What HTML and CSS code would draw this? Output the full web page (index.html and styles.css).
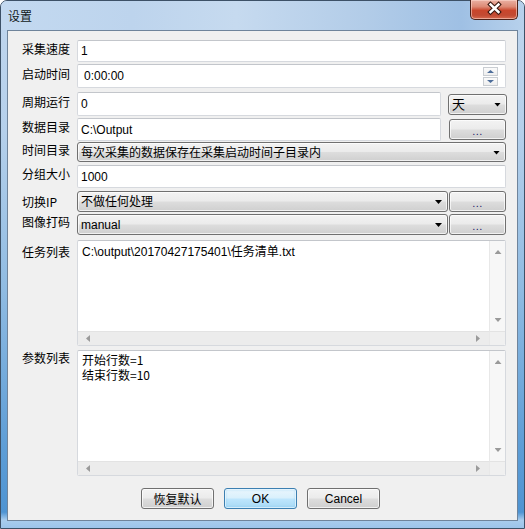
FILE: index.html
```html
<!DOCTYPE html>
<html lang="zh-CN">
<head>
<meta charset="utf-8">
<title>设置</title>
<link rel="stylesheet" href="styles.css">
</head>
<body>
<div class="window">
  <div class="titlebar">
    <span class="title">设置</span>
    <div class="close-btn">
      <svg width="48" height="20" viewBox="0 0 48 20">
        <path d="M20.5 5.5 L28.5 13 M28.5 5.5 L20.5 13" stroke="#3b1a12" stroke-width="4.6" stroke-linecap="square" fill="none"/>
        <path d="M20.5 5.5 L28.5 13 M28.5 5.5 L20.5 13" stroke="#ffffff" stroke-width="2.4" stroke-linecap="square" fill="none"/>
      </svg>
    </div>
  </div>
  <div class="client">
    <div class="form">
      <div class="row row-speed">
        <span class="label">采集速度</span>
        <div class="field">1</div>
      </div>
      <div class="row row-start">
        <span class="label">启动时间</span>
        <div class="field field-time">
          <span class="time-text">0:00:00</span>
          <div class="spinner"><span class="spin"><i class="tri-up"></i></span><span class="spin"><i class="tri-down"></i></span></div>
        </div>
      </div>
      <div class="row row-period">
        <span class="label">周期运行</span>
        <div class="field field-short">0</div>
        <div class="combo combo-unit"><span class="combo-text">天</span><i class="combo-arrow"></i></div>
      </div>
      <div class="row row-dir">
        <span class="label">数据目录</span>
        <div class="field field-short">C:\Output</div>
        <div class="btn btn-dots">...</div>
      </div>
      <div class="row row-timedir">
        <span class="label">时间目录</span>
        <div class="combo combo-wide"><span class="combo-text">每次采集的数据保存在采集启动时间子目录内</span><i class="combo-arrow"></i></div>
      </div>
      <div class="row row-group">
        <span class="label">分组大小</span>
        <div class="field">1000</div>
      </div>
      <div class="row row-ip">
        <span class="label label-ip">切换IP</span>
        <div class="combo combo-mid"><span class="combo-text">不做任何处理</span><i class="combo-arrow"></i></div>
        <div class="btn btn-dots btn-dots-near">...</div>
      </div>
      <div class="row row-img">
        <span class="label">图像打码</span>
        <div class="combo combo-mid"><span class="combo-text">manual</span><i class="combo-arrow"></i></div>
        <div class="btn btn-dots btn-dots-near">...</div>
      </div>
      <div class="row row-task">
        <span class="label label-task">任务列表</span>
        <div class="textbox">
          <div class="textbox-content">C:\output\20170427175401\任务清单.txt</div>
          <div class="vscroll"><i class="sa sa-up"></i><i class="sa sa-down"></i></div>
          <div class="hscroll"><i class="sa sa-left"></i><i class="sa sa-right"></i></div>
          <div class="corner"></div>
        </div>
      </div>
      <div class="row row-param">
        <span class="label label-param">参数列表</span>
        <div class="textbox">
          <div class="textbox-content textbox-lines"><div>开始行数=1</div><div>结束行数=10</div></div>
          <div class="vscroll"><i class="sa sa-up"></i><i class="sa sa-down"></i></div>
          <div class="hscroll"><i class="sa sa-left"></i><i class="sa sa-right"></i></div>
          <div class="corner"></div>
        </div>
      </div>
    </div>
    <div class="buttons">
      <div class="btn btn-action">恢复默认</div>
      <div class="btn btn-action btn-default">OK</div>
      <div class="btn btn-action">Cancel</div>
    </div>
  </div>
</div>
</body>
</html>
```

FILE: styles.css
```css
* { box-sizing: border-box; }

html, body {
  margin: 0;
  padding: 0;
  width: 525px;
  height: 529px;
  overflow: hidden;
  background: #ffffff;
}

body {
  font-family: "Liberation Sans", "Noto Sans CJK SC", sans-serif;
  font-size: 12px;
  color: #000;
}

.window {
  width: 525px;
  height: 529px;
  display: flex;
  flex-direction: column;
  border: 1px solid #3d5167;
  border-radius: 7px 7px 0 0;
  padding: 0 6px 7px 6px;
  background: linear-gradient(to bottom, #c0d6ee 0%, #b5d0eb 25%, #8fbbe2 55%, #5d9dd6 85%, #4f94d2 97%, #a9cdee 98.5%, #9cc4ea 100%);
}

.titlebar {
  height: 29px;
  display: flex;
  align-items: flex-start;
  margin: 0 -6px;
  padding: 0 6px;
  background: linear-gradient(to right, #c3d9f0 0%, #bdd4ed 25%, #c6daef 45%, #b2cce8 70%, #9fc0e4 88%, #b7d1ec 100%);
  border-radius: 6px 6px 0 0;
}

.title {
  font-family: "Noto Sans CJK SC", sans-serif;
  font-size: 12px;
  line-height: 14px;
  margin-top: 8px;
  margin-left: 1px;
  color: #101820;
}

.close-btn {
  margin-left: auto;
  margin-top: -1px;
  width: 48px;
  height: 20px;
  border: 1px solid #4b2118;
  border-top: none;
  border-radius: 0 0 5px 5px;
  background: linear-gradient(to bottom, #eab1a3 0%, #dd8a75 35%, #c9462c 55%, #c24a32 80%, #d66a4f 100%);
  box-shadow: inset 0 0 0 1px rgba(255, 220, 210, 0.55);
  overflow: hidden;
}

.close-btn svg { display: block; margin: -1px 0 0 -1px; }

.client {
  flex: 1;
  display: flex;
  flex-direction: column;
  background: #f0f0f0;
  border: 1px solid #6f849b;
}

.form {
  display: flex;
  flex-direction: column;
  padding: 9px 11px 0 14px;
}

.row {
  display: flex;
  align-items: center;
}

.label {
  flex: 0 0 55px;
  font-family: "Noto Sans CJK SC", sans-serif;
  font-size: 12px;
  line-height: 14px;
  white-space: nowrap;
  margin-bottom: 5px;
}

.label-ip { margin-bottom: 0; }

.row-speed { height: 22px; }
.row-start { height: 24px; margin-top: 2px; }
.row-period { height: 24px; margin-top: 4px; }
.row-dir { height: 23px; margin-top: 2px; }
.row-timedir { height: 20px; margin-top: 1px; }
.row-group { height: 23px; margin-top: 3px; }
.row-ip { height: 21px; margin-top: 3px; }
.row-img { height: 21px; margin-top: 2px; }
.row-task { height: 106px; margin-top: 5px; align-items: flex-start; }
.row-param { height: 126px; margin-top: 4px; align-items: flex-start; }

.label-task { margin-top: 5px; margin-bottom: 0; }
.label-param { margin-top: 1px; margin-bottom: 0; }

.field {
  flex: 1;
  height: 100%;
  display: flex;
  align-items: center;
  padding: 0 3px;
  background: #ffffff;
  border: 1px solid #d6d9de;
  border-top-color: #c3c6cb;
  border-radius: 2px;
  white-space: nowrap;
}

.field-short { flex: 0 0 364px; }

.field-time { padding-left: 6px; }

.time-text { flex: 1; }

.spinner {
  display: flex;
  flex-direction: column;
  gap: 1px;
  margin-right: 4px;
  margin-top: 1px;
}

.spin {
  width: 15px;
  height: 9px;
  border: 1px solid #c9cdd2;
  background: linear-gradient(#fbfbfb, #eeeeee);
  display: flex;
  align-items: center;
  justify-content: center;
}

.tri-up, .tri-down {
  display: block;
  width: 7px;
  height: 3px;
  background: #4d6d9a;
}
.tri-up { clip-path: polygon(50% 0, 100% 100%, 0 100%); }
.tri-down { clip-path: polygon(0 0, 100% 0, 50% 100%); }

.combo, .btn {
  display: flex;
  align-items: center;
  border: 1px solid #707070;
  border-radius: 3px;
  background: linear-gradient(to bottom, #f3f3f3 0%, #ebebeb 48%, #dddddd 52%, #cfcfcf 100%);
  box-shadow: inset 0 0 0 1px rgba(255, 255, 255, 0.7);
  white-space: nowrap;
}

.combo {
  height: 100%;
  padding: 0 5px 0 3px;
}

.combo-text {
  flex: 1;
  font-family: "Noto Sans CJK SC", sans-serif;
  line-height: 14px;
}

.combo-arrow {
  display: block;
  width: 7px;
  height: 4px;
  margin-top: 1px;
  background: #000;
  clip-path: polygon(0 0, 100% 0, 50% 100%);
}

.combo-unit {
  flex: 0 0 59px;
  height: 21px;
  margin-left: 7px;
}

.combo-unit .combo-text { font-size: 13px; }

.combo-wide { flex: 1; }

.combo-mid { flex: 0 0 371px; }

.combo-mid .combo-text { font-family: "Liberation Sans", "Noto Sans CJK SC", sans-serif; }

.btn {
  justify-content: center;
  font-family: "Liberation Sans", "Noto Sans CJK SC", sans-serif;
}

.btn-dots {
  flex: 0 0 57px;
  height: 21px;
  margin-left: 8px;
  font-size: 11px;
  color: #1a1a6a;
  padding-top: 3px;
  letter-spacing: 0.5px;
}

.btn-dots-near { margin-left: 1px; height: 100%; }

.textbox {
  flex: 1;
  height: 100%;
  display: grid;
  grid-template-columns: 1fr 16px;
  grid-template-rows: 1fr 14px;
  background: #ffffff;
  border: 1px solid #d6d9de;
  border-top-color: #c3c6cb;
  border-radius: 2px;
  overflow: hidden;
}

.textbox-content {
  padding: 4px 4px;
  font-family: "Liberation Sans", "Noto Sans CJK SC", sans-serif;
  line-height: 14px;
  white-space: nowrap;
}

.textbox-lines {
  font-family: "Noto Sans CJK SC", sans-serif;
  line-height: 15px;
  padding-top: 1px;
}

.vscroll {
  display: flex;
  flex-direction: column;
  justify-content: space-between;
  align-items: center;
  padding: 9px 0 9px 1px;
  background: #f7f7f7;
  border-left: 1px solid #e8e8e8;
}

.hscroll {
  display: flex;
  justify-content: space-between;
  align-items: center;
  padding: 0 9px 0 8px;
  background: #ececec;
  border-top: 1px solid #e3e3e3;
}

.corner {
  background: #f0f0f0;
  border-top: 1px solid #e3e3e3;
  border-left: 1px solid #e8e8e8;
}

.sa {
  display: block;
  background: #9a9a9a;
}
.sa-up { width: 7px; height: 4px; clip-path: polygon(50% 0, 100% 100%, 0 100%); }
.sa-down { width: 7px; height: 4px; clip-path: polygon(0 0, 100% 0, 50% 100%); }
.sa-left { width: 4px; height: 7px; clip-path: polygon(0 50%, 100% 0, 100% 100%); }
.sa-right { width: 4px; height: 7px; clip-path: polygon(0 0, 100% 50%, 0 100%); }

.buttons {
  display: flex;
  gap: 10px;
  margin-top: 12px;
  padding-left: 133px;
}

.btn-action {
  width: 73px;
  height: 21px;
  font-size: 12px;
}

.btn-action:first-child { font-family: "Noto Sans CJK SC", sans-serif; }

.btn-default {
  border-color: #3c7fb1;
  background: linear-gradient(to bottom, #eaf6fd 0%, #d9f0fc 48%, #bee6fd 52%, #a7d9f5 100%);
  box-shadow: inset 0 0 0 1px rgba(255, 255, 255, 0.6), inset 0 0 2px 1px rgba(120, 200, 245, 0.5);
}
```
